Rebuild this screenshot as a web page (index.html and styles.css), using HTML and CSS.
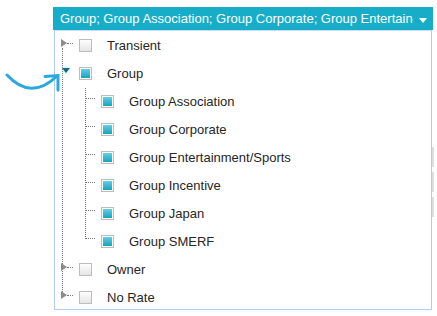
FILE: index.html
```html
<!DOCTYPE html>
<html>
<head>
<meta charset="utf-8">
<link rel="stylesheet" href="styles.css">
</head>
<body>
<div class="stage">
  <div class="combo">
    <div class="combo-head">
      <span class="combo-text">Group; Group Association; Group Corporate; Group Entertain</span>
      <span class="caret"></span>
    </div>
    <div class="panel">
      <ul class="tree">
        <li>
          <div class="row">
            <span class="twig"><span class="tri-right"></span><span class="dash"></span></span>
            <span class="cb"></span>
            <span class="label">Transient</span>
          </div>
        </li>
        <li>
          <div class="row">
            <span class="twig"><span class="tri-down"></span></span>
            <span class="cb on"></span>
            <span class="label">Group</span>
          </div>
          <ul class="children">
            <li class="row child"><span class="dash long"></span><span class="cb on"></span><span class="label">Group Association</span></li>
            <li class="row child"><span class="dash long"></span><span class="cb on"></span><span class="label">Group Corporate</span></li>
            <li class="row child"><span class="dash long"></span><span class="cb on"></span><span class="label">Group Entertainment/Sports</span></li>
            <li class="row child"><span class="dash long"></span><span class="cb on"></span><span class="label">Group Incentive</span></li>
            <li class="row child"><span class="dash long"></span><span class="cb on"></span><span class="label">Group Japan</span></li>
            <li class="row child"><span class="dash long"></span><span class="cb on"></span><span class="label">Group SMERF</span></li>
          </ul>
        </li>
        <li>
          <div class="row">
            <span class="twig"><span class="tri-right"></span><span class="dash"></span></span>
            <span class="cb"></span>
            <span class="label">Owner</span>
          </div>
        </li>
        <li>
          <div class="row">
            <span class="twig"><span class="tri-right"></span><span class="dash"></span></span>
            <span class="cb"></span>
            <span class="label">No Rate</span>
          </div>
        </li>
      </ul>
    </div>
  </div>
  <div class="edge-marks"><span></span><span></span><span></span></div>
  <svg class="pointer" width="70" height="100" viewBox="0 0 70 100">
    <path d="M7 75 Q31 101 57 76" fill="none" stroke="#2aa9e0" stroke-width="3" stroke-linecap="round"/>
    <path d="M45 76.5 L58 75.5 L58 90" fill="none" stroke="#2aa9e0" stroke-width="3" stroke-linecap="round" stroke-linejoin="miter"/>
  </svg>
</div>
</body>
</html>
```

FILE: styles.css
```css
html, body {
  margin: 0;
  padding: 0;
  background: #ffffff;
}

.stage {
  position: relative;
  width: 437px;
  height: 316px;
  overflow: hidden;
  font-family: "Liberation Sans", Arial, sans-serif;
  font-size: 13px;
}

.combo {
  margin-left: 53px;
  padding-top: 7px;
  width: 380px;
}

.combo-head {
  height: 23px;
  box-sizing: border-box;
  background: #17adc9;
  color: #ffffff;
  display: flex;
  align-items: center;
  padding: 0 9px 0 7px;
  gap: 6px;
}

.combo-text {
  flex: 1;
  white-space: nowrap;
  line-height: 23px;
}

.caret {
  width: 0;
  height: 0;
  border-left: 4px solid transparent;
  border-right: 4px solid transparent;
  border-top: 5px solid #ffffff;
  margin-top: 4px;
}

.panel {
  margin-left: 1px;
  width: 376px;
  height: 278px;
  border: 1px solid #b3cdf2;
  border-top-color: #c9dcf5;
  overflow: hidden;
}

.tree,
.children {
  list-style: none;
  margin: 0;
  padding: 0;
}

.tree {
  position: relative;
  isolation: isolate;
}

.tree::before {
  content: "";
  position: absolute;
  left: 7px;
  top: 17px;
  bottom: 17px;
  border-left: 1px dotted #7a7a7a;
  z-index: -1;
}

.children {
  position: relative;
}

.children::before {
  content: "";
  position: absolute;
  left: 30px;
  top: 1px;
  bottom: 16px;
  border-left: 1px dotted #7a7a7a;
}

.row {
  height: 28px;
  display: flex;
  align-items: center;
  color: #262626;
  padding-left: 6px;
}

.row.child {
  padding-left: 30px;
}

.twig {
  width: 18px;
  height: 28px;
  display: flex;
  align-items: center;
}

.tri-right {
  width: 0;
  height: 0;
  border-top: 4px solid transparent;
  border-bottom: 4px solid transparent;
  border-left: 6px solid #8c8c8c;
  margin-bottom: 5px;
}

.tri-down {
  width: 0;
  height: 0;
  border-left: 4px solid transparent;
  border-right: 4px solid transparent;
  border-top: 5px solid #1b6878;
  margin-left: 1px;
  margin-bottom: 5px;
  filter: drop-shadow(0 0 2px #7fe6f5);
}

.dash {
  width: 6px;
  border-top: 1px dotted #7a7a7a;
  margin-bottom: 4px;
}

.dash.long {
  width: 10px;
  margin-bottom: 6px;
  margin-right: 6px;
}

.cb {
  width: 13px;
  height: 13px;
  box-sizing: border-box;
  border: 1px solid #bdbdbd;
  background: linear-gradient(#ffffff, #e4e4e4);
  margin-right: 15px;
  flex: none;
}

.cb.on {
  padding: 1px;
  background: linear-gradient(#62d0e4, #17a2bf) content-box, #ffffff;
}

.label {
  white-space: nowrap;
}

.edge-marks {
  position: absolute;
  left: 432px;
  top: 147px;
  display: flex;
  flex-direction: column;
  gap: 5px;
}

.edge-marks span {
  display: block;
  width: 2px;
  height: 20px;
  background: #dedede;
}

.pointer {
  position: absolute;
  left: 0;
  top: 0;
}
```
